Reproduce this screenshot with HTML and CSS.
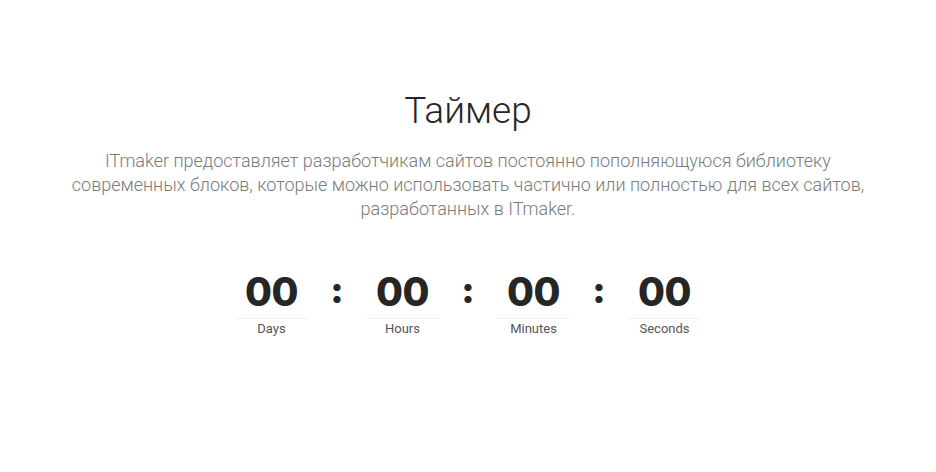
FILE: index.html
```html
<!DOCTYPE html>
<html lang="ru">
<head>
<meta charset="utf-8">
<title>Таймер</title>
<link rel="stylesheet" href="styles.css">
</head>
<body>
<section class="timer-section">
  <h1 class="title">Таймер</h1>
  <p class="lead">ITmaker предоставляет разработчикам сайтов постоянно пополняющуюся библиотеку современных блоков, которые можно использовать частично или полностью для всех сайтов, разработанных в ITmaker.</p>
  <div class="countdown">
    <div class="unit"><div class="num">00</div><div class="label">Days</div></div>
    <div class="sep">:</div>
    <div class="unit"><div class="num">00</div><div class="label">Hours</div></div>
    <div class="sep">:</div>
    <div class="unit"><div class="num">00</div><div class="label">Minutes</div></div>
    <div class="sep">:</div>
    <div class="unit"><div class="num">00</div><div class="label">Seconds</div></div>
  </div>
</section>
</body>
</html>
```
FILE: styles.css
```css
* { box-sizing: border-box; }
html, body { margin: 0; padding: 0; background: #fff; }
body { font-family: Roboto, "Noto Sans", sans-serif; color: #222; }
.timer-section {
  display: flex;
  flex-direction: column;
  align-items: center;
  padding-top: 88px;
}
.title {
  margin: 0;
  font-size: 37px;
  font-weight: 300;
  line-height: 46px;
  color: #262626;
}
.lead {
  margin: 15px 0 0;
  max-width: 806px;
  text-align: center;
  font-size: 18px;
  font-weight: 300;
  line-height: 24px;
  color: #7a7a7a;
}
.countdown {
  display: flex;
  align-items: flex-start;
  margin-top: 47px;
}
.unit {
  width: 73px;
  display: flex;
  flex-direction: column;
  align-items: center;
}
.num {
  width: 100%;
  text-align: center;
  font-family: Inter, Roboto, sans-serif;
  font-size: 39px;
  font-weight: 800;
  line-height: 48px;
  letter-spacing: -0.5px;
  color: #262626;
  border-bottom: 1px solid #efefef;
  padding-bottom: 2px;
}
.label {
  margin-top: 2px;
  font-size: 13px;
  line-height: 16px;
  color: #555;
}
.sep {
  width: 58px;
  text-align: center;
  font-family: Inter, Roboto, sans-serif;
  font-size: 36px;
  font-weight: 900;
  line-height: 44px;
  color: #262626;
}
```
